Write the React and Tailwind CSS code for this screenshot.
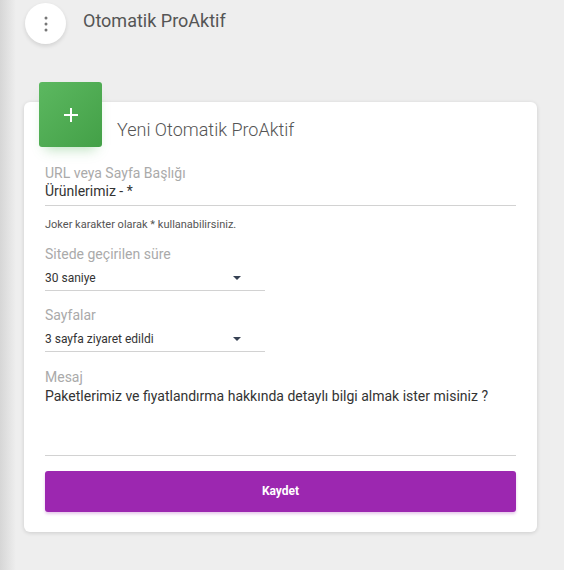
import React from "react";

function Caret() {
  return (
    <svg width="8" height="4" viewBox="0 0 8 4" className="text-gray-700">
      <path d="M0 0h8L4 4z" fill="currentColor" />
    </svg>
  );
}

function SelectField({ label, value, className }) {
  return (
    <div className={`w-[220px] ${className}`}>
      <div className="text-[14px] leading-[18px] text-[#aaaaaa]">{label}</div>
      <div className="mt-[7px] flex h-[21px] items-center justify-between border-b border-[#d2d2d2] pb-[4px] pr-[24px]">
        <span className="text-[12px] text-[#333]">{value}</span>
        <Caret />
      </div>
    </div>
  );
}

export default function App() {
  return (
    <div
      className="relative min-h-[570px] w-full bg-[#eeeeee] text-[#333]"
      style={{ fontFamily: "Roboto, 'Liberation Sans', sans-serif" }}
    >
      <div className="pointer-events-none absolute inset-y-0 left-0 w-[16px] bg-gradient-to-r from-[#d6d6d6] to-[#eeeeee]" />

      {/* header */}
      <div className="relative flex items-center pl-[25px] pt-[3px]">
        <button className="flex h-[41px] w-[41px] items-center justify-center rounded-full bg-white shadow-[0_2px_4px_rgba(0,0,0,0.12)]">
          <svg width="4" height="16" viewBox="0 0 4 16" className="text-[#777]">
            <circle cx="2" cy="2" r="1.5" fill="currentColor" />
            <circle cx="2" cy="8" r="1.5" fill="currentColor" />
            <circle cx="2" cy="14" r="1.5" fill="currentColor" />
          </svg>
        </button>
        <h1 className="ml-[17px] -mt-[6px] text-[18px] font-normal text-[#555]">Otomatik ProAktif</h1>
      </div>

      {/* card */}
      <div className="relative ml-[24px] mt-[58px] w-[513px] rounded-[6px] bg-white px-[21px] pb-[20px] shadow-[0_1px_4px_rgba(0,0,0,0.14)]">
        <div className="flex">
          <div className="-mt-[20px] ml-[-6px] flex h-[65px] w-[63px] items-center justify-center rounded-[3px] bg-gradient-to-br from-[#5cb860] to-[#43a047] shadow-[0_8px_12px_-6px_rgba(76,175,80,0.4)]">
            <svg width="16" height="16" viewBox="0 0 16 16">
              <path d="M8 1v14M1 8h14" stroke="white" strokeWidth="2" />
            </svg>
          </div>
          <div className="ml-[15px] mt-[14px] text-[18px] font-light text-[#555]">Yeni Otomatik ProAktif</div>
        </div>

        <div className="mt-[17px]">
          <div className="text-[14px] leading-[18px] text-[#aaaaaa]">URL veya Sayfa Başlığı</div>
          <div className="border-b border-[#d2d2d2] pb-[5px] text-[14px] leading-[18px] text-[#333]">Ürünlerimiz - *</div>
        </div>

        <div className="mt-[11px] text-[11px] text-[#555]">Joker karakter olarak * kullanabilirsiniz.</div>

        <SelectField className="mt-[11px]" label="Sitede geçirilen süre" value="30 saniye" />
        <SelectField className="mt-[15px]" label="Sayfalar" value="3 sayfa ziyaret edildi" />

        <div className="mt-[16px]">
          <div className="text-[14px] leading-[18px] text-[#aaaaaa]">Mesaj</div>
          <div className="h-[70px] border-b border-[#d2d2d2] pt-[1px] text-[14px] leading-[18px] text-[#333]">
            Paketlerimiz ve fiyatlandırma hakkında detaylı bilgi almak ister misiniz ?
          </div>
        </div>

        <button className="mt-[15px] flex h-[41px] w-full items-center justify-center rounded-[3px] bg-[#9c27b0] text-[12px] font-bold text-white shadow-[0_2px_3px_rgba(156,39,176,0.25)]">
          Kaydet
        </button>
      </div>
    </div>
  );
}
